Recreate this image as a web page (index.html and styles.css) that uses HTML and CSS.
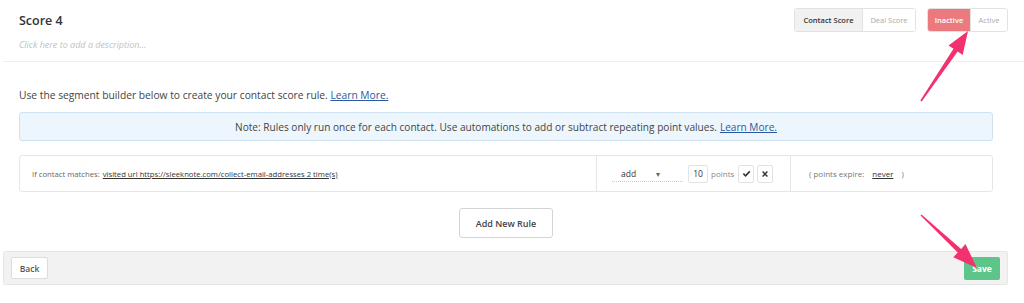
FILE: index.html
```html
<!DOCTYPE html>
<html lang="en">
<head>
    <meta charset="UTF-8">
    <title>Score 4</title>
    <link rel="stylesheet" href="styles.css">
</head>
<body>
    <div class="page">
        <header class="score-header">
            <div class="title-block">
                <h1>Score 4</h1>
                <p class="description">Click here to add a description...</p>
            </div>
            <div class="toggles">
                <div class="btn-group">
                    <span class="seg seg-on w-contact">Contact Score</span>
                    <span class="seg w-deal">Deal Score</span>
                </div>
                <div class="btn-group">
                    <span class="seg seg-red w-inactive">Inactive</span>
                    <span class="seg w-active">Active</span>
                </div>
            </div>
        </header>

        <div class="content">
            <p class="intro">Use the segment builder below to create your contact score rule. <a href="#">Learn More.</a></p>

            <div class="note">
                Note: Rules only run once for each contact. Use automations to add or subtract repeating point values. <a href="#">Learn More.</a>
            </div>

            <div class="rule">
                <div class="rule-cond">
                    If contact matches: <a href="#">visited url https://sleeknote.com/collect-email-addresses 2 time(s)</a>
                </div>
                <div class="rule-points">
                    <span class="select">add <span class="caret">&#9662;</span></span>
                    <span class="num">10</span>
                    <span class="pts">points</span>
                    <span class="icon-btn">
                        <svg width="9" height="9" viewBox="0 0 10 10"><path d="M1.5 5.2 L4 7.6 L8.6 2.6" fill="none" stroke="#333" stroke-width="1.8"/></svg>
                    </span>
                    <span class="icon-btn">
                        <svg width="8" height="8" viewBox="0 0 10 10"><path d="M2 2 L8 8 M8 2 L2 8" fill="none" stroke="#333" stroke-width="1.8"/></svg>
                    </span>
                </div>
                <div class="rule-expire">
                    <span>( points expire:<a class="never" href="#">never</a>)</span>
                </div>
            </div>

            <div class="add-row">
                <button class="add-btn">Add New Rule</button>
            </div>
        </div>

        <footer class="actions">
            <button class="back-btn">Back</button>
            <button class="save-btn">Save</button>
        </footer>

        <!-- callout arrows drawn over the screenshot -->
        <svg class="arrows" width="1024" height="303" viewBox="0 0 1024 303">
            <polygon points="920.3,100.5 953.5,48.8 948.5,45.4 968,31 962.7,55 957.7,51.6 921.7,101.5" fill="#f2326f"/>
            <polygon points="921.5,214.4 961.1,248.9 965.5,244.1 977,268 953.3,257.3 957.7,252.5 920.5,215.6" fill="#f2326f"/>
        </svg>
    </div>
</body>
</html>
```

FILE: styles.css
```css
/* General styles */
body {
    margin: 0;
    padding: 0;
    background: #fff;
    font-family: "Open Sans", Arial, sans-serif;
    color: #444;
}

.page {
    position: relative;
    width: 1024px;
    height: 303px;
    overflow: hidden;
}

/* Header */
.score-header {
    display: flex;
    justify-content: space-between;
    align-items: flex-start;
    margin-left: 3px;
    padding: 8px 16px 0 16px;
    height: 53px;
    border-bottom: 1px solid #eee;
}

.title-block h1 {
    margin: 4px 0 0 0;
    font-size: 12.5px;
    font-weight: 600;
    color: #333;
}

.description {
    margin: 9px 0 0 0;
    font-size: 9px;
    font-style: italic;
    color: #c2c2c2;
}

.toggles {
    display: flex;
    gap: 11px;
}

.btn-group {
    display: flex;
    height: 24px;
    border: 1px solid #e2e2e2;
    border-radius: 3px;
    overflow: hidden;
    box-sizing: border-box;
}

.seg {
    display: flex;
    align-items: center;
    justify-content: center;
    box-sizing: border-box;
    font-size: 7.5px;
    color: #aaa;
    background: #fff;
}

.seg + .seg {
    border-left: 1px solid #e2e2e2;
}

.w-contact { width: 67px; }
.w-deal { width: 53px; }
.w-inactive { width: 42px; }
.w-active { width: 37px; }

.seg-on {
    background: #f1f1f1;
    color: #333;
    font-weight: 600;
}

.seg-red {
    background: #ea7a7d;
    color: #fff;
    font-weight: 600;
}

/* Main content */
.content {
    padding: 0 31px 0 19px;
}

.intro {
    margin: 26px 0 0 0;
    font-size: 10.25px;
    color: #444;
}

a {
    color: #2c5aa0;
    text-decoration: underline;
}

.note {
    margin-top: 10px;
    height: 29px;
    box-sizing: border-box;
    display: flex;
    align-items: center;
    justify-content: center;
    background: #eef6fd;
    border: 1px solid #cfe2f1;
    border-radius: 3px;
    font-size: 10.1px;
    color: #444;
}

.note a {
    margin-left: 3px;
}

/* Rule row */
.rule {
    margin-top: 14px;
    display: flex;
    height: 37px;
    box-sizing: border-box;
    border: 1px solid #e6e6e6;
    border-radius: 3px;
    font-size: 7.7px;
    color: #666;
}

.rule a {
    color: #333;
}

.rule-cond {
    width: 577px;
    display: flex;
    align-items: center;
    gap: 3px;
    padding-left: 12px;
    box-sizing: border-box;
    border-right: 1px solid #e6e6e6;
}

.rule-points {
    width: 194px;
    display: flex;
    align-items: center;
    padding-left: 15px;
    box-sizing: border-box;
    border-right: 1px solid #e6e6e6;
    font-size: 8px;
}

.select {
    width: 71px;
    height: 17px;
    box-sizing: border-box;
    padding: 3px 0 0 9px;
    border-bottom: 1px dotted #ccc;
    color: #333;
    font-size: 8.5px;
}

.caret {
    margin-left: 18px;
    font-size: 8px;
    color: #666;
}

.num {
    margin-left: 5px;
    width: 20px;
    height: 18px;
    box-sizing: border-box;
    border: 1px solid #e2e2e2;
    border-radius: 2px;
    display: flex;
    align-items: center;
    justify-content: center;
    color: #333;
    font-size: 8.5px;
}

.pts {
    margin: 0 1px 0 3px;
    color: #888;
}

.icon-btn {
    width: 16px;
    height: 18px;
    box-sizing: border-box;
    border: 1px solid #e2e2e2;
    border-radius: 2px;
    display: flex;
    align-items: center;
    justify-content: center;
    margin-left: 3px;
}

.rule-expire {
    flex: 1;
    display: flex;
    align-items: center;
    padding-left: 18px;
    color: #777;
    font-size: 8px;
}

.never {
    margin: 0 8px 0 8px;
}

/* Add rule */
.add-row {
    display: flex;
    justify-content: center;
    margin-top: 16px;
}

.add-btn {
    width: 94px;
    height: 30px;
    background: #fff;
    border: 1px solid #d4d4d4;
    border-radius: 3px;
    font-family: "Open Sans", Arial, sans-serif;
    font-size: 9px;
    font-weight: 600;
    color: #444;
}

/* Footer actions */
.actions {
    margin: 13px 16px 0 3px;
    height: 34px;
    box-sizing: border-box;
    background: #f2f2f2;
    border: 1px solid #e6e6e6;
    border-radius: 2px;
    display: flex;
    align-items: center;
    justify-content: space-between;
    padding: 0 7px;
}

.back-btn {
    width: 37px;
    height: 22px;
    background: #fff;
    border: 1px solid #ddd;
    border-radius: 2px;
    font-family: "Open Sans", Arial, sans-serif;
    font-size: 8.5px;
    font-weight: 600;
    color: #555;
    padding: 0;
}

.save-btn {
    width: 36px;
    height: 23px;
    background: #5dc58a;
    border: none;
    border-radius: 2px;
    font-family: "Open Sans", Arial, sans-serif;
    font-size: 8.5px;
    font-weight: 700;
    color: #fff;
    padding: 0;
}

/* Overlay arrows */
.arrows {
    position: absolute;
    top: 0;
    left: 0;
    pointer-events: none;
}
```
